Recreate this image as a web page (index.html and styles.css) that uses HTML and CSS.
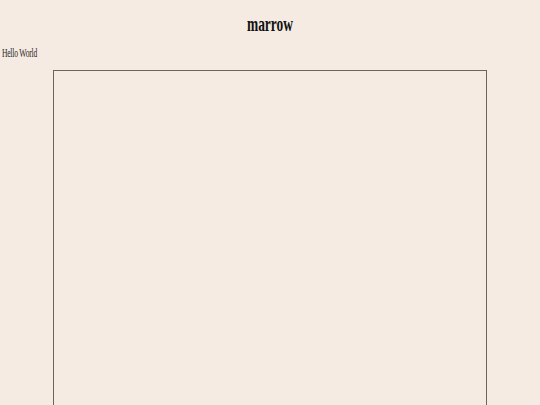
FILE: index.html
```html
<!DOCTYPE html>
<html>
<head>
<meta charset="utf-8">
<link rel="stylesheet" href="styles.css">
</head>
<body>
<header class="header"><h1 class="title">marrow</h1></header>
<p class="greeting">Hello World</p>
<div class="canvas-wrap"><div class="canvas"></div></div>
</body>
</html>
```
FILE: styles.css
```css
html, body { margin: 0; padding: 0; }
body {
  background: #f5ebe2;
  color: #111;
  font-family: "Liberation Serif", serif;
  width: 540px;
  height: 405px;
  overflow: hidden;
}
.header { display: flex; justify-content: center; padding-top: 13px; height: 32px; }
.title {
  margin: 0;
  font-size: 21px;
  font-weight: bold;
  line-height: 22px;
  transform: scaleX(0.64);
}
.greeting {
  margin: 0;
  padding-left: 3px;
  font-size: 12px;
  line-height: 16px;
  letter-spacing: -0.3px;
  color: #2a2624;
  transform-origin: left;
  transform: scaleX(0.63);
}
.canvas-wrap { display: flex; justify-content: center; padding-top: 9px; }
.canvas {
  width: 432px;
  height: 335px;
  border: 1px solid #6b6560;
  border-bottom: none;
}
```
